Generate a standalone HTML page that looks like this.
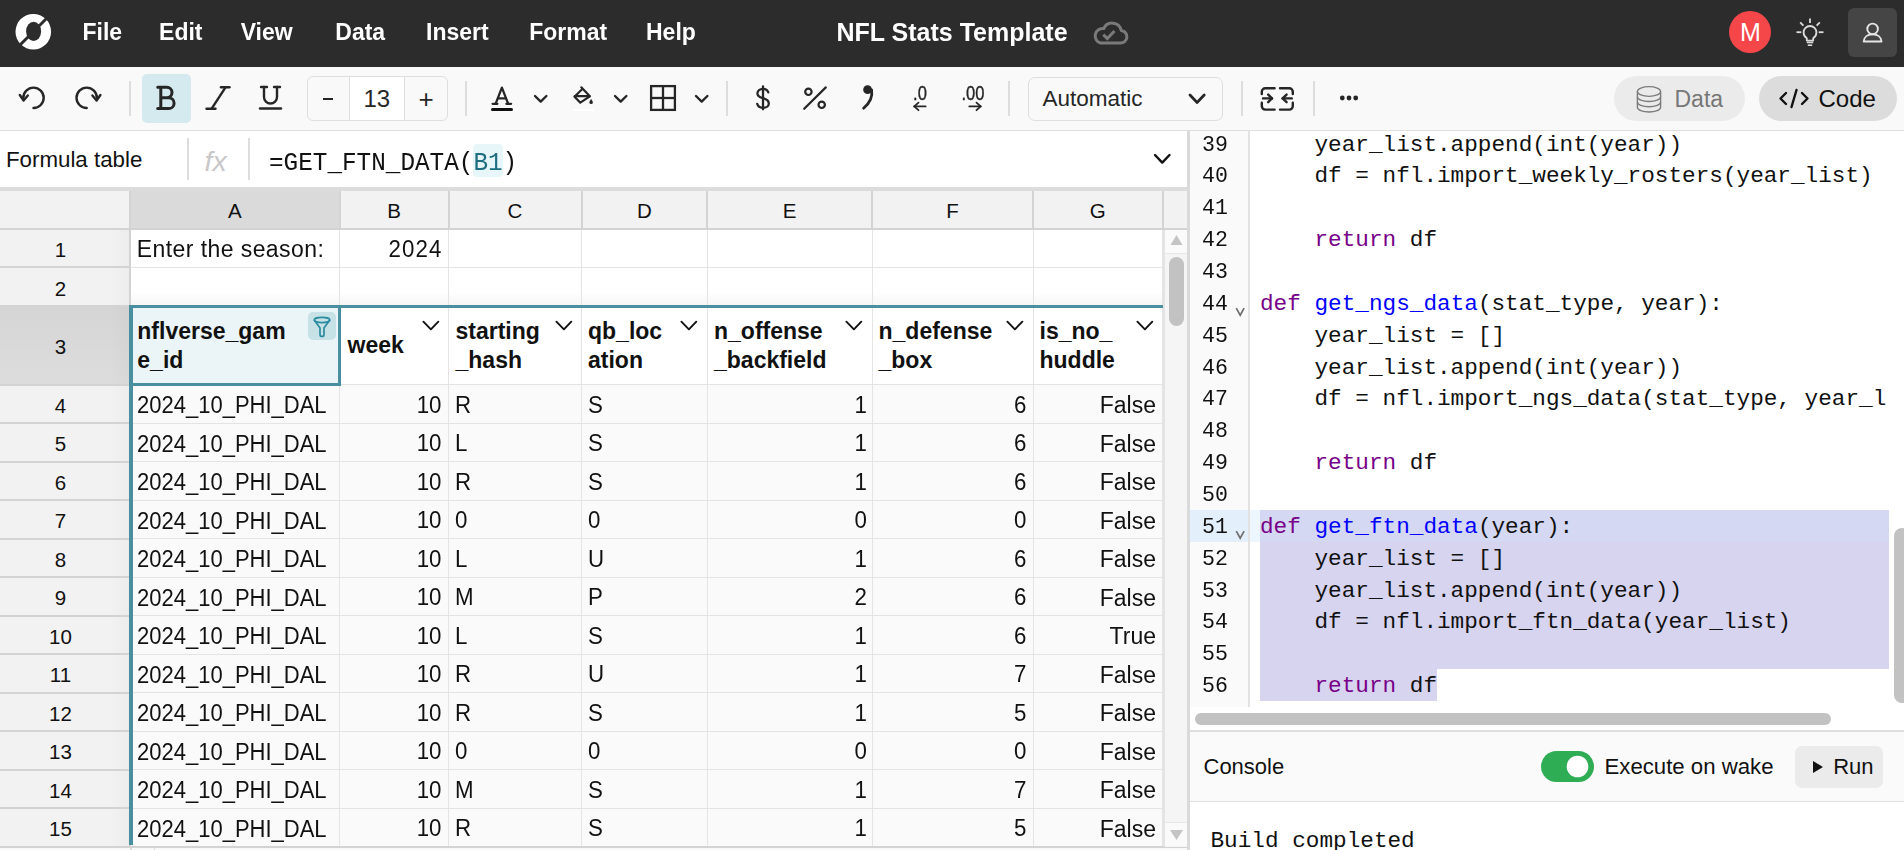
<!DOCTYPE html><html><head><meta charset="utf-8"><style>
html,body{margin:0;padding:0;width:1904px;height:850px;overflow:hidden;background:#fafafa;}
body{position:relative;font-family:"Liberation Sans", sans-serif;}
.t{position:absolute;white-space:pre;}
.r{position:absolute;}
</style></head><body>
<div class="r" style="left:0px;top:0px;width:1904px;height:67px;background:#2c2c2c;"></div>
<svg class="r" style="left:13px;top:11px;" width="42" height="42" viewBox="0 0 42 42"><defs><mask id="lm"><rect x="0" y="0" width="42" height="42" fill="#fff"/>
<ellipse cx="20.6" cy="20.4" rx="7.5" ry="9.6" fill="#000"/>
<line x1="36" y1="5" x2="5" y2="36" stroke="#000" stroke-width="3"/></mask></defs>
<circle cx="20.3" cy="20.7" r="17.8" fill="#fff" mask="url(#lm)"/></svg>
<div class="t" style="top:20.83px;font-size:23px;line-height:23px;color:#fff;font-weight:700;font-family:'Liberation Sans', sans-serif;left:82.50px;transform:scale(1.0,1.06);transform-origin:left 19.47px;">File</div>
<div class="t" style="top:20.83px;font-size:23px;line-height:23px;color:#fff;font-weight:700;font-family:'Liberation Sans', sans-serif;left:159.10px;transform:scale(1.0,1.06);transform-origin:left 19.47px;">Edit</div>
<div class="t" style="top:20.83px;font-size:23px;line-height:23px;color:#fff;font-weight:700;font-family:'Liberation Sans', sans-serif;left:240.70px;transform:scale(1.0,1.06);transform-origin:left 19.47px;">View</div>
<div class="t" style="top:20.83px;font-size:23px;line-height:23px;color:#fff;font-weight:700;font-family:'Liberation Sans', sans-serif;left:335.30px;transform:scale(1.0,1.06);transform-origin:left 19.47px;">Data</div>
<div class="t" style="top:20.83px;font-size:23px;line-height:23px;color:#fff;font-weight:700;font-family:'Liberation Sans', sans-serif;left:426.00px;transform:scale(1.0,1.06);transform-origin:left 19.47px;">Insert</div>
<div class="t" style="top:20.83px;font-size:23px;line-height:23px;color:#fff;font-weight:700;font-family:'Liberation Sans', sans-serif;left:529.20px;transform:scale(1.0,1.06);transform-origin:left 19.47px;">Format</div>
<div class="t" style="top:20.83px;font-size:23px;line-height:23px;color:#fff;font-weight:700;font-family:'Liberation Sans', sans-serif;left:646.00px;transform:scale(1.0,1.06);transform-origin:left 19.47px;">Help</div>
<div class="t" style="top:20.14px;font-size:25px;line-height:25px;color:#fff;font-weight:700;font-family:'Liberation Sans', sans-serif;left:836.50px;transform:scale(1.0,1.04);transform-origin:left 21.16px;">NFL Stats Template</div>
<svg class="r" style="left:1088.5px;top:17px;" width="42" height="30" viewBox="0 0 42 30"><path d="M11.5 26 H31 A6.3 6.3 0 0 0 32.2 13.4 A9.2 9.2 0 0 0 14.8 11.6 A7.4 7.4 0 0 0 11.5 26 Z" fill="none" stroke="#7a7a7a" stroke-width="3" stroke-linejoin="round"/>
<path d="M14.3 17.6 L18.3 21.6 L25.5 14" fill="none" stroke="#7a7a7a" stroke-width="3" stroke-linejoin="miter"/></svg>
<svg class="r" style="left:1729px;top:11px;" width="42" height="42" viewBox="0 0 42 42"><circle cx="21" cy="21" r="21" fill="#f5474a"/></svg>
<div class="t" style="top:19.84px;font-size:25px;line-height:25px;color:#fff;font-weight:400;font-family:'Liberation Sans', sans-serif;left:1250.50px;width:1000px;text-align:center;">M</div>
<svg class="r" style="left:1794px;top:16px;" width="32" height="32" viewBox="0 0 32 32"><g fill="none" stroke="#dcdcdc" stroke-width="1.8" stroke-linecap="butt">
<line x1="16" y1="2.4" x2="16" y2="7"/><line x1="2.5" y1="16.2" x2="7.3" y2="16.2"/><line x1="24.7" y1="16.2" x2="29.5" y2="16.2"/>
<line x1="6.2" y1="6.3" x2="9.4" y2="9.7"/><line x1="25.8" y1="6.3" x2="22.6" y2="9.7"/>
<path d="M12.8 24.6 V22.3 C10.6 20.8 9.6 18.8 9.6 16.4 A6.4 6.4 0 0 1 22.4 16.4 C22.4 18.8 21.4 20.8 19.2 22.3 V24.6 Z" stroke-linejoin="round"/>
<line x1="12.8" y1="26.5" x2="19.2" y2="26.5" stroke-width="1.5"/><line x1="13.8" y1="29.2" x2="18.2" y2="29.2" stroke-width="1.6"/></g></svg>
<div class="r" style="left:1848px;top:8px;width:49px;height:49px;background:#454545;border-radius:6px;"></div>
<svg class="r" style="left:1860px;top:20px;" width="26" height="26" viewBox="0 0 26 26"><g fill="none" stroke="#e6e6e6" stroke-width="1.9"><circle cx="12.6" cy="8.9" r="5.3"/>
<path d="M3.7 21.5 C4 16.8 7.8 14.3 12.6 14.3 C17.4 14.3 21.2 16.8 21.5 21.5 Z" stroke-linejoin="round"/></g></svg>
<div class="r" style="left:0px;top:67px;width:1904px;height:63px;background:#f9f9f9;"></div>
<div class="r" style="left:0px;top:130px;width:1904px;height:1px;background:#dedede;"></div>
<div class="r" style="left:129px;top:81px;width:2px;height:35px;background:#dddddd;"></div>
<div class="r" style="left:465px;top:81px;width:2px;height:35px;background:#dddddd;"></div>
<div class="r" style="left:726px;top:81px;width:2px;height:35px;background:#dddddd;"></div>
<div class="r" style="left:1008px;top:81px;width:2px;height:35px;background:#dddddd;"></div>
<div class="r" style="left:1241px;top:81px;width:2px;height:35px;background:#dddddd;"></div>
<div class="r" style="left:1313px;top:81px;width:2px;height:35px;background:#dddddd;"></div>
<svg class="r" style="left:17px;top:85px;" width="30" height="26" viewBox="0 0 30 26"><g fill="none" stroke="#262626" stroke-width="2.4" stroke-linecap="round" stroke-linejoin="round">
<path d="M16.5 23 A10.2 10.2 0 1 0 6.3 12.8 L6.5 14.5"/><path d="M2.8 10 L6.6 15.5 L10.8 10.5"/></g></svg>
<svg class="r" style="left:73px;top:85px;" width="30" height="26" viewBox="0 0 30 26"><g fill="none" stroke="#262626" stroke-width="2.4" stroke-linecap="round" stroke-linejoin="round">
<path d="M13.7 23 A10.2 10.2 0 1 1 23.9 12.8 L23.7 14.5"/><path d="M27.4 10 L23.6 15.5 L19.4 10.5"/></g></svg>
<div class="r" style="left:142px;top:74px;width:49px;height:49px;background:#d4eaef;border-radius:5px;"></div>
<svg class="r" style="left:150px;top:80px;" width="36" height="36" viewBox="0 0 36 36"><path d="M7.7 7.3 H16.8 A5.2 5.2 0 0 1 16.8 17.7 H10.8 M10.8 17.7 H18.65 A5.45 5.45 0 0 1 18.65 28.6 H7.7 M10.8 7.3 V28.6" fill="none" stroke="#262626" stroke-width="3" stroke-linecap="round" stroke-linejoin="round"/></svg>
<svg class="r" style="left:203px;top:84px;" width="30" height="28" viewBox="0 0 30 28"><g fill="none" stroke="#262626" stroke-width="2.4" stroke-linecap="round">
<line x1="22.5" y1="3.3" x2="8.5" y2="24.8"/><line x1="18" y1="3.3" x2="26.5" y2="3.3"/><line x1="3.5" y1="24.8" x2="12.5" y2="24.8"/></g></svg>
<svg class="r" style="left:256px;top:84px;" width="30" height="28" viewBox="0 0 30 28"><g fill="none" stroke="#262626" stroke-width="2.4" stroke-linecap="round">
<path d="M8 3 V13 A6.5 6.5 0 0 0 21 13 V3"/><line x1="5" y1="3" x2="11" y2="3"/><line x1="18" y1="3" x2="24" y2="3"/>
<line x1="4" y1="24.5" x2="25" y2="24.5"/></g></svg>
<div class="r" style="left:306.5px;top:76px;width:141.5px;height:45px;border:1px solid #dedede;border-radius:6px;box-sizing:border-box;"></div>
<div class="r" style="left:350px;top:77px;width:54px;height:43px;background:#ffffff;"></div>
<div class="r" style="left:349px;top:77px;width:1px;height:43px;background:#dedede;"></div>
<div class="r" style="left:404px;top:77px;width:1px;height:43px;background:#dedede;"></div>
<div class="r" style="left:323px;top:98.2px;width:10px;height:2.200000000000003px;background:#262626;"></div>
<div class="t" style="top:86.88px;font-size:24px;line-height:24px;color:#262626;font-weight:400;font-family:'Liberation Sans', sans-serif;left:-123.20px;width:1000px;text-align:center;">13</div>
<div class="t" style="top:86.39px;font-size:26px;line-height:26px;color:#262626;font-weight:400;font-family:'Liberation Sans', sans-serif;left:-73.80px;width:1000px;text-align:center;">+</div>
<svg class="r" style="left:488px;top:82.8px;" width="28" height="24" viewBox="0 0 28 24"><g fill="none" stroke="#262626" stroke-width="2.3" stroke-linecap="round" stroke-linejoin="round"><path d="M7.6 20.8 L13.9 4.6 L20.2 20.8"/><line x1="10.6" y1="15.4" x2="17.5" y2="15.4"/><line x1="4.6" y1="20.8" x2="9.4" y2="20.8"/><line x1="18.4" y1="20.8" x2="23.1" y2="20.8"/></g></svg>
<div class="r" style="left:490.8px;top:108px;width:22.69999999999999px;height:3.200000000000003px;background:#111;border-radius:2px;"></div>
<svg class="r" style="left:533.3px;top:94.2px;" width="15.4" height="9.6" viewBox="0 0 15.4 9.6"><path d="M2 2 L7.7 7.6 L13.4 2" fill="none" stroke="#262626" stroke-width="2.4" stroke-linecap="round" stroke-linejoin="round"/></svg>
<svg class="r" style="left:570px;top:83px;" width="28" height="26" viewBox="0 0 28 26"><g fill="none" stroke="#262626" stroke-width="2.2" stroke-linejoin="round" stroke-linecap="round">
<path d="M11.3 4.3 L19.8 13.3 L10.3 19.6 L4.5 13.8 L12.6 5.7"/><line x1="4.8" y1="13.2" x2="19.5" y2="13.2"/></g>
<path d="M21.1 16 C20 17.6 19.4 18.6 19.4 19.4 A1.7 1.7 0 0 0 22.8 19.4 C22.8 18.6 22.2 17.6 21.1 16 Z" fill="#262626"/></svg>
<div class="r" style="left:572.5px;top:109.3px;width:21.5px;height:1.7000000000000028px;background:#ffffff;border-radius:1px;"></div>
<svg class="r" style="left:613.2px;top:94.2px;" width="15.4" height="9.6" viewBox="0 0 15.4 9.6"><path d="M2 2 L7.7 7.6 L13.4 2" fill="none" stroke="#262626" stroke-width="2.4" stroke-linecap="round" stroke-linejoin="round"/></svg>
<svg class="r" style="left:648px;top:83px;" width="30" height="30" viewBox="0 0 30 30"><g fill="none" stroke="#262626" stroke-width="2.3"><rect x="3.1" y="3.1" width="23.8" height="23.8"/>
<line x1="15" y1="3" x2="15" y2="27"/><line x1="3" y1="15" x2="27" y2="15"/></g></svg>
<svg class="r" style="left:694.3px;top:94.2px;" width="15.4" height="9.6" viewBox="0 0 15.4 9.6"><path d="M2 2 L7.7 7.6 L13.4 2" fill="none" stroke="#262626" stroke-width="2.4" stroke-linecap="round" stroke-linejoin="round"/></svg>
<svg class="r" style="left:748px;top:80px;" width="30" height="36" viewBox="0 0 30 36"><g fill="none" stroke="#262626" stroke-width="2.3" stroke-linecap="round"><line x1="15" y1="6.4" x2="15" y2="29.3"/><path d="M20.3 12.3 C19.5 10 17.5 8.8 15 8.8 C11.8 8.8 9.4 10.8 9.4 13.4 C9.4 16 11.6 17.1 15 18.2 C18.6 19.3 20.8 20.6 20.8 23.4 C20.8 26 18.3 27.8 15 27.8 C12 27.8 9.8 26.3 9.2 23.8"/></g></svg>
<svg class="r" style="left:800px;top:84px;" width="30" height="28" viewBox="0 0 30 28"><g fill="none" stroke="#262626" stroke-width="2.2" stroke-linecap="round">
<line x1="25.8" y1="3.4" x2="4.2" y2="24.8"/><circle cx="8.4" cy="7.8" r="3.2"/><circle cx="21.7" cy="20.8" r="3.2"/></g></svg>
<svg class="r" style="left:858px;top:82px;" width="20" height="30" viewBox="0 0 20 30"><circle cx="9.6" cy="7.7" r="4.4" fill="#262626"/><path d="M13.6 8 C14.6 14 12.4 20.5 5.6 26.2" fill="none" stroke="#262626" stroke-width="2.8" stroke-linecap="round"/></svg>
<div class="t" style="top:83.89px;font-size:19.5px;line-height:19.5px;color:#262626;font-weight:400;font-family:'Liberation Sans', sans-serif;left:420.00px;width:1000px;text-align:center;transform:scale(0.85,1.0);transform-origin:center 16.51px;-webkit-text-stroke:0.35px #262626;">.0</div>
<svg class="r" style="left:910px;top:100px;" width="20" height="13" viewBox="0 0 20 13"><g fill="none" stroke="#262626" stroke-width="1.8" stroke-linecap="round" stroke-linejoin="round"><line x1="4.2" y1="6.4" x2="15.6" y2="6.4"/><path d="M8.5 2.6 L4.2 6.4 L8.5 10.2"/></g></svg>
<div class="t" style="top:83.89px;font-size:19.5px;line-height:19.5px;color:#262626;font-weight:400;font-family:'Liberation Sans', sans-serif;left:473.30px;width:1000px;text-align:center;transform:scale(0.85,1.0);transform-origin:center 16.51px;-webkit-text-stroke:0.35px #262626;">.00</div>
<svg class="r" style="left:966px;top:100px;" width="20" height="13" viewBox="0 0 20 13"><g fill="none" stroke="#262626" stroke-width="1.8" stroke-linecap="round" stroke-linejoin="round"><line x1="3.3" y1="6.4" x2="14.7" y2="6.4"/><path d="M10.5 2.6 L14.7 6.4 L10.5 10.2"/></g></svg>
<div class="r" style="left:1027.5px;top:77px;width:195px;height:44px;border:1px solid #dedede;border-radius:7px;box-sizing:border-box;"></div>
<div class="t" style="top:87.95px;font-size:22.5px;line-height:22.5px;color:#262626;font-weight:400;font-family:'Liberation Sans', sans-serif;left:1042.50px;">Automatic</div>
<svg class="r" style="left:1188.3px;top:93px;" width="18.2" height="11.5" viewBox="0 0 18.2 11.5"><path d="M2 2 L9.1 9.5 L16.2 2" fill="none" stroke="#262626" stroke-width="2.7" stroke-linecap="round" stroke-linejoin="round"/></svg>
<svg class="r" style="left:1255px;top:82px;" width="45" height="34" viewBox="0 0 45 34"><g fill="none" stroke="#262626" stroke-width="2.4" stroke-linecap="round" stroke-linejoin="round">
<path d="M19.6 6.2 H10.3 A3.5 3.5 0 0 0 6.8 9.7 V12"/><path d="M6.8 20.8 V24.1 A3.5 3.5 0 0 0 10.3 27.6 H19.6"/>
<path d="M25 6.2 H34.3 A3.5 3.5 0 0 1 37.8 9.7 V12"/><path d="M37.8 20.8 V24.1 A3.5 3.5 0 0 1 34.3 27.6 H25"/>
<path d="M8 16.4 H17"/><path d="M13.2 12.6 L17 16.4 L13.2 20.2"/>
<path d="M36.8 16.4 H27.6"/><path d="M31.6 12.6 L27.6 16.4 L31.6 20.2"/></g></svg>
<svg class="r" style="left:1336px;top:92px;" width="26" height="12" viewBox="0 0 26 12"><g fill="#262626"><circle cx="6.3" cy="6" r="2.4"/><circle cx="13" cy="6" r="2.4"/><circle cx="19.7" cy="6" r="2.4"/></g></svg>
<div class="r" style="left:1614px;top:76px;width:131px;height:45px;background:#ebebeb;border-radius:23px;"></div>
<svg class="r" style="left:1634px;top:84px;" width="30" height="30" viewBox="0 0 30 30"><g fill="none" stroke="#7b7b7b" stroke-width="1.35"><ellipse cx="15" cy="7.5" rx="11.6" ry="4.9"/>
<path d="M3.4 7.5 V23.3 C3.4 26 8.6 28 15 28 C21.4 28 26.6 26 26.6 23.3 V7.5"/>
<path d="M3.4 12.8 C3.4 15.5 8.6 17.5 15 17.5 C21.4 17.5 26.6 15.5 26.6 12.8"/><path d="M3.4 18 C3.4 20.7 8.6 22.7 15 22.7 C21.4 22.7 26.6 20.7 26.6 18"/></g></svg>
<div class="t" style="top:87.73px;font-size:23px;line-height:23px;color:#777777;font-weight:400;font-family:'Liberation Sans', sans-serif;left:1674.50px;">Data</div>
<div class="r" style="left:1759px;top:76px;width:138px;height:45px;background:#dcdcdc;border-radius:23px;"></div>
<svg class="r" style="left:1777px;top:87px;" width="34" height="23" viewBox="0 0 34 23"><g fill="none" stroke="#111" stroke-width="2.4" stroke-linecap="round" stroke-linejoin="round">
<path d="M9 6 L3.5 11.5 L9 17"/><path d="M25 6 L30.5 11.5 L25 17"/><line x1="19.5" y1="3" x2="14.5" y2="20"/></g></svg>
<div class="t" style="top:86.68px;font-size:24px;line-height:24px;color:#111;font-weight:400;font-family:'Liberation Sans', sans-serif;left:1818.50px;">Code</div>
<div class="r" style="left:0px;top:131px;width:1187px;height:56px;background:#ffffff;"></div>
<div class="t" style="top:148.72px;font-size:22.3px;line-height:22.3px;color:#111;font-weight:400;font-family:'Liberation Sans', sans-serif;left:6.00px;">Formula table</div>
<div class="r" style="left:187px;top:138px;width:2px;height:42px;background:#dddddd;"></div>
<div class="r" style="left:248px;top:138px;width:2px;height:42px;background:#dddddd;"></div>
<div class="t" style="top:147.07px;font-size:28.5px;line-height:28.5px;color:#c8c8c8;font-weight:400;font-family:'Liberation Sans', sans-serif;font-style:italic;left:204.50px;">fx</div>
<div class="r" style="left:473px;top:144px;width:30px;height:32.5px;background:#e6f6f9;border-radius:4px;"></div>
<div class='t' style="left:269px;top:149.69px;font-size:26.5px;line-height:26.5px;font-family:'Liberation Mono', monospace;color:#111;transform:scaleX(0.918);transform-origin:left top;">=GET_FTN_DATA(<span style='color:#1e6d80'>B1</span>)</div>
<svg class="r" style="left:1153.3px;top:153.4px;" width="18.5" height="11.6" viewBox="0 0 18.5 11.6"><path d="M2 2 L9.25 9.6 L16.5 2" fill="none" stroke="#111" stroke-width="2.4" stroke-linecap="round" stroke-linejoin="round"/></svg>
<div class="r" style="left:0px;top:187px;width:1187px;height:4px;background:#dcdcdc;"></div>
<div class="r" style="left:0px;top:191px;width:1187px;height:39px;background:#f2f2f2;"></div>
<div class="r" style="left:130px;top:191px;width:209px;height:38px;background:#dadada;"></div>
<div class="t" style="top:200.65px;font-size:20.5px;line-height:20.5px;color:#111;font-weight:400;font-family:'Liberation Sans', sans-serif;left:-265.25px;width:1000px;text-align:center;">A</div>
<div class="t" style="top:200.65px;font-size:20.5px;line-height:20.5px;color:#111;font-weight:400;font-family:'Liberation Sans', sans-serif;left:-106.00px;width:1000px;text-align:center;">B</div>
<div class="t" style="top:200.65px;font-size:20.5px;line-height:20.5px;color:#111;font-weight:400;font-family:'Liberation Sans', sans-serif;left:15.00px;width:1000px;text-align:center;">C</div>
<div class="t" style="top:200.65px;font-size:20.5px;line-height:20.5px;color:#111;font-weight:400;font-family:'Liberation Sans', sans-serif;left:144.40px;width:1000px;text-align:center;">D</div>
<div class="t" style="top:200.65px;font-size:20.5px;line-height:20.5px;color:#111;font-weight:400;font-family:'Liberation Sans', sans-serif;left:289.65px;width:1000px;text-align:center;">E</div>
<div class="t" style="top:200.65px;font-size:20.5px;line-height:20.5px;color:#111;font-weight:400;font-family:'Liberation Sans', sans-serif;left:452.50px;width:1000px;text-align:center;">F</div>
<div class="t" style="top:200.65px;font-size:20.5px;line-height:20.5px;color:#111;font-weight:400;font-family:'Liberation Sans', sans-serif;left:597.75px;width:1000px;text-align:center;">G</div>
<div class="r" style="left:0px;top:228px;width:1187px;height:2px;background:#d3d3d3;"></div>
<div class="r" style="left:128.5px;top:191px;width:2.0px;height:659px;background:#d3d3d3;"></div>
<div class="r" style="left:338.5px;top:191px;width:2.0px;height:38px;background:#d3d3d3;"></div>
<div class="r" style="left:447.5px;top:191px;width:2.0px;height:38px;background:#d3d3d3;"></div>
<div class="r" style="left:580.5px;top:191px;width:2.0px;height:38px;background:#d3d3d3;"></div>
<div class="r" style="left:706.3px;top:191px;width:2.0px;height:38px;background:#d3d3d3;"></div>
<div class="r" style="left:871px;top:191px;width:2px;height:38px;background:#d3d3d3;"></div>
<div class="r" style="left:1032px;top:191px;width:2px;height:38px;background:#d3d3d3;"></div>
<div class="r" style="left:1161.5px;top:191px;width:2.0px;height:38px;background:#d3d3d3;"></div>
<div class="r" style="left:130.5px;top:230px;width:1032.0px;height:76px;background:#ffffff;"></div>
<div class="r" style="left:130.5px;top:306px;width:1032.0px;height:78px;background:#ffffff;"></div>
<div class="r" style="left:130.5px;top:385px;width:1032.0px;height:462px;background:#fafafa;"></div>
<div class="r" style="left:130.5px;top:291px;width:1032.0px;height:14px;background:linear-gradient(to bottom, rgba(0,0,0,0), rgba(0,0,0,0.035));"></div>
<div class="r" style="left:0px;top:230px;width:128.5px;height:617px;background:#f2f2f2;"></div>
<div class="r" style="left:0px;top:306px;width:128.5px;height:78.60000000000002px;background:linear-gradient(to bottom,#d5d5d5,#dddddd);"></div>
<div class="r" style="left:110px;top:230px;width:18.5px;height:617px;background:linear-gradient(to right, rgba(0,0,0,0), rgba(0,0,0,0.025));"></div>
<div class="r" style="left:0px;top:266.2px;width:128.5px;height:2.0px;background:#d3d3d3;"></div>
<div class="r" style="left:130.5px;top:266.7px;width:1032.0px;height:1.0px;background:#e4e4e4;"></div>
<div class="r" style="left:0px;top:305.3px;width:128.5px;height:2.0px;background:#d3d3d3;"></div>
<div class="r" style="left:130.5px;top:305.8px;width:1032.0px;height:1.0px;background:#e4e4e4;"></div>
<div class="r" style="left:0px;top:383.6px;width:128.5px;height:2.0px;background:#d3d3d3;"></div>
<div class="r" style="left:130.5px;top:384.1px;width:1032.0px;height:1.0px;background:#e4e4e4;"></div>
<div class="r" style="left:0px;top:422.1px;width:128.5px;height:2.0px;background:#d3d3d3;"></div>
<div class="r" style="left:130.5px;top:422.6px;width:1032.0px;height:1.0px;background:#e4e4e4;"></div>
<div class="r" style="left:0px;top:460.6px;width:128.5px;height:2.0px;background:#d3d3d3;"></div>
<div class="r" style="left:130.5px;top:461.1px;width:1032.0px;height:1.0px;background:#e4e4e4;"></div>
<div class="r" style="left:0px;top:499.1px;width:128.5px;height:2.0px;background:#d3d3d3;"></div>
<div class="r" style="left:130.5px;top:499.6px;width:1032.0px;height:1.0px;background:#e4e4e4;"></div>
<div class="r" style="left:0px;top:537.6px;width:128.5px;height:2.0px;background:#d3d3d3;"></div>
<div class="r" style="left:130.5px;top:538.1px;width:1032.0px;height:1.0px;background:#e4e4e4;"></div>
<div class="r" style="left:0px;top:576.1px;width:128.5px;height:2.0px;background:#d3d3d3;"></div>
<div class="r" style="left:130.5px;top:576.6px;width:1032.0px;height:1.0px;background:#e4e4e4;"></div>
<div class="r" style="left:0px;top:614.6px;width:128.5px;height:2.0px;background:#d3d3d3;"></div>
<div class="r" style="left:130.5px;top:615.1px;width:1032.0px;height:1.0px;background:#e4e4e4;"></div>
<div class="r" style="left:0px;top:653.1px;width:128.5px;height:2.0px;background:#d3d3d3;"></div>
<div class="r" style="left:130.5px;top:653.6px;width:1032.0px;height:1.0px;background:#e4e4e4;"></div>
<div class="r" style="left:0px;top:691.6px;width:128.5px;height:2.0px;background:#d3d3d3;"></div>
<div class="r" style="left:130.5px;top:692.1px;width:1032.0px;height:1.0px;background:#e4e4e4;"></div>
<div class="r" style="left:0px;top:730.1px;width:128.5px;height:2.0px;background:#d3d3d3;"></div>
<div class="r" style="left:130.5px;top:730.6px;width:1032.0px;height:1.0px;background:#e4e4e4;"></div>
<div class="r" style="left:0px;top:768.6px;width:128.5px;height:2.0px;background:#d3d3d3;"></div>
<div class="r" style="left:130.5px;top:769.1px;width:1032.0px;height:1.0px;background:#e4e4e4;"></div>
<div class="r" style="left:0px;top:807.1px;width:128.5px;height:2.0px;background:#d3d3d3;"></div>
<div class="r" style="left:130.5px;top:807.6px;width:1032.0px;height:1.0px;background:#e4e4e4;"></div>
<div class="r" style="left:0px;top:845.6px;width:128.5px;height:2.0px;background:#d3d3d3;"></div>
<div class="r" style="left:130.5px;top:846.1px;width:1032.0px;height:1.0px;background:#e4e4e4;"></div>
<div class="r" style="left:339.0px;top:230px;width:1.0px;height:617px;background:#e4e4e4;"></div>
<div class="r" style="left:448.0px;top:230px;width:1.0px;height:617px;background:#e4e4e4;"></div>
<div class="r" style="left:581.0px;top:230px;width:1.0px;height:617px;background:#e4e4e4;"></div>
<div class="r" style="left:706.8px;top:230px;width:1.0px;height:617px;background:#e4e4e4;"></div>
<div class="r" style="left:871.5px;top:230px;width:1.0px;height:617px;background:#e4e4e4;"></div>
<div class="r" style="left:1032.5px;top:230px;width:1.0px;height:617px;background:#e4e4e4;"></div>
<div class="r" style="left:1161.5px;top:230px;width:2.0px;height:617px;background:#e4e4e4;"></div>
<div class="t" style="top:240.30px;font-size:20.5px;line-height:20.5px;color:#111;font-weight:400;font-family:'Liberation Sans', sans-serif;left:-439.50px;width:1000px;text-align:center;">1</div>
<div class="t" style="top:278.70px;font-size:20.5px;line-height:20.5px;color:#111;font-weight:400;font-family:'Liberation Sans', sans-serif;left:-439.50px;width:1000px;text-align:center;">2</div>
<div class="t" style="top:337.40px;font-size:20.5px;line-height:20.5px;color:#111;font-weight:400;font-family:'Liberation Sans', sans-serif;left:-439.50px;width:1000px;text-align:center;">3</div>
<div class="t" style="top:395.80px;font-size:20.5px;line-height:20.5px;color:#111;font-weight:400;font-family:'Liberation Sans', sans-serif;left:-439.50px;width:1000px;text-align:center;">4</div>
<div class="t" style="top:434.30px;font-size:20.5px;line-height:20.5px;color:#111;font-weight:400;font-family:'Liberation Sans', sans-serif;left:-439.50px;width:1000px;text-align:center;">5</div>
<div class="t" style="top:472.80px;font-size:20.5px;line-height:20.5px;color:#111;font-weight:400;font-family:'Liberation Sans', sans-serif;left:-439.50px;width:1000px;text-align:center;">6</div>
<div class="t" style="top:511.30px;font-size:20.5px;line-height:20.5px;color:#111;font-weight:400;font-family:'Liberation Sans', sans-serif;left:-439.50px;width:1000px;text-align:center;">7</div>
<div class="t" style="top:549.80px;font-size:20.5px;line-height:20.5px;color:#111;font-weight:400;font-family:'Liberation Sans', sans-serif;left:-439.50px;width:1000px;text-align:center;">8</div>
<div class="t" style="top:588.30px;font-size:20.5px;line-height:20.5px;color:#111;font-weight:400;font-family:'Liberation Sans', sans-serif;left:-439.50px;width:1000px;text-align:center;">9</div>
<div class="t" style="top:626.80px;font-size:20.5px;line-height:20.5px;color:#111;font-weight:400;font-family:'Liberation Sans', sans-serif;left:-439.50px;width:1000px;text-align:center;">10</div>
<div class="t" style="top:665.30px;font-size:20.5px;line-height:20.5px;color:#111;font-weight:400;font-family:'Liberation Sans', sans-serif;left:-439.50px;width:1000px;text-align:center;">11</div>
<div class="t" style="top:703.80px;font-size:20.5px;line-height:20.5px;color:#111;font-weight:400;font-family:'Liberation Sans', sans-serif;left:-439.50px;width:1000px;text-align:center;">12</div>
<div class="t" style="top:742.30px;font-size:20.5px;line-height:20.5px;color:#111;font-weight:400;font-family:'Liberation Sans', sans-serif;left:-439.50px;width:1000px;text-align:center;">13</div>
<div class="t" style="top:780.80px;font-size:20.5px;line-height:20.5px;color:#111;font-weight:400;font-family:'Liberation Sans', sans-serif;left:-439.50px;width:1000px;text-align:center;">14</div>
<div class="t" style="top:819.30px;font-size:20.5px;line-height:20.5px;color:#111;font-weight:400;font-family:'Liberation Sans', sans-serif;left:-439.50px;width:1000px;text-align:center;">15</div>
<div class="r" style="left:0px;top:845.5px;width:1187px;height:2.0px;background:#d3d3d3;"></div>
<div class="r" style="left:0px;top:847.5px;width:1187px;height:2.5px;background:#f9f9f9;"></div>
<div class="r" style="left:130px;top:847.5px;width:1.5px;height:2.5px;background:#dddddd;"></div>
<div class="r" style="left:153.5px;top:847.5px;width:1.5px;height:2.5px;background:#dddddd;"></div>
<div class="t" style="top:238.13px;font-size:23px;line-height:23px;color:#111;font-weight:400;font-family:'Liberation Sans', sans-serif;letter-spacing:0.42px;left:136.80px;transform:scale(1.0,1.05);transform-origin:left 19.47px;">Enter the season:</div>
<div class="t" style="top:238.92px;font-size:22.3px;line-height:22.3px;color:#111;font-weight:400;font-family:'Liberation Sans', sans-serif;letter-spacing:1.1px;right:1461.40px;transform:scale(1.0,1.08);transform-origin:right 18.88px;">2024</div>
<div class="t" style="top:395.08px;font-size:22px;line-height:22px;color:#111;font-weight:400;font-family:'Liberation Sans', sans-serif;left:137.00px;transform:scale(1.0,1.1);transform-origin:left 18.62px;">2024_10_PHI_DAL</div>
<div class="t" style="top:394.82px;font-size:22.3px;line-height:22.3px;color:#111;font-weight:400;font-family:'Liberation Sans', sans-serif;right:1462.50px;transform:scale(1.0,1.08);transform-origin:right 18.88px;">10</div>
<div class="t" style="top:394.82px;font-size:22.3px;line-height:22.3px;color:#111;font-weight:400;font-family:'Liberation Sans', sans-serif;left:455.00px;transform:scale(1.0,1.08);transform-origin:left 18.88px;">R</div>
<div class="t" style="top:394.82px;font-size:22.3px;line-height:22.3px;color:#111;font-weight:400;font-family:'Liberation Sans', sans-serif;left:588.00px;transform:scale(1.0,1.08);transform-origin:left 18.88px;">S</div>
<div class="t" style="top:394.82px;font-size:22.3px;line-height:22.3px;color:#111;font-weight:400;font-family:'Liberation Sans', sans-serif;right:1037.00px;transform:scale(1.0,1.08);transform-origin:right 18.88px;">1</div>
<div class="t" style="top:394.82px;font-size:22.3px;line-height:22.3px;color:#111;font-weight:400;font-family:'Liberation Sans', sans-serif;right:877.50px;transform:scale(1.0,1.08);transform-origin:right 18.88px;">6</div>
<div class="t" style="top:394.23px;font-size:23px;line-height:23px;color:#111;font-weight:400;font-family:'Liberation Sans', sans-serif;right:748.00px;transform:scale(1.0,1.05);transform-origin:right 19.47px;">False</div>
<div class="t" style="top:433.58px;font-size:22px;line-height:22px;color:#111;font-weight:400;font-family:'Liberation Sans', sans-serif;left:137.00px;transform:scale(1.0,1.1);transform-origin:left 18.62px;">2024_10_PHI_DAL</div>
<div class="t" style="top:433.32px;font-size:22.3px;line-height:22.3px;color:#111;font-weight:400;font-family:'Liberation Sans', sans-serif;right:1462.50px;transform:scale(1.0,1.08);transform-origin:right 18.88px;">10</div>
<div class="t" style="top:433.32px;font-size:22.3px;line-height:22.3px;color:#111;font-weight:400;font-family:'Liberation Sans', sans-serif;left:455.00px;transform:scale(1.0,1.08);transform-origin:left 18.88px;">L</div>
<div class="t" style="top:433.32px;font-size:22.3px;line-height:22.3px;color:#111;font-weight:400;font-family:'Liberation Sans', sans-serif;left:588.00px;transform:scale(1.0,1.08);transform-origin:left 18.88px;">S</div>
<div class="t" style="top:433.32px;font-size:22.3px;line-height:22.3px;color:#111;font-weight:400;font-family:'Liberation Sans', sans-serif;right:1037.00px;transform:scale(1.0,1.08);transform-origin:right 18.88px;">1</div>
<div class="t" style="top:433.32px;font-size:22.3px;line-height:22.3px;color:#111;font-weight:400;font-family:'Liberation Sans', sans-serif;right:877.50px;transform:scale(1.0,1.08);transform-origin:right 18.88px;">6</div>
<div class="t" style="top:432.73px;font-size:23px;line-height:23px;color:#111;font-weight:400;font-family:'Liberation Sans', sans-serif;right:748.00px;transform:scale(1.0,1.05);transform-origin:right 19.47px;">False</div>
<div class="t" style="top:472.08px;font-size:22px;line-height:22px;color:#111;font-weight:400;font-family:'Liberation Sans', sans-serif;left:137.00px;transform:scale(1.0,1.1);transform-origin:left 18.62px;">2024_10_PHI_DAL</div>
<div class="t" style="top:471.82px;font-size:22.3px;line-height:22.3px;color:#111;font-weight:400;font-family:'Liberation Sans', sans-serif;right:1462.50px;transform:scale(1.0,1.08);transform-origin:right 18.88px;">10</div>
<div class="t" style="top:471.82px;font-size:22.3px;line-height:22.3px;color:#111;font-weight:400;font-family:'Liberation Sans', sans-serif;left:455.00px;transform:scale(1.0,1.08);transform-origin:left 18.88px;">R</div>
<div class="t" style="top:471.82px;font-size:22.3px;line-height:22.3px;color:#111;font-weight:400;font-family:'Liberation Sans', sans-serif;left:588.00px;transform:scale(1.0,1.08);transform-origin:left 18.88px;">S</div>
<div class="t" style="top:471.82px;font-size:22.3px;line-height:22.3px;color:#111;font-weight:400;font-family:'Liberation Sans', sans-serif;right:1037.00px;transform:scale(1.0,1.08);transform-origin:right 18.88px;">1</div>
<div class="t" style="top:471.82px;font-size:22.3px;line-height:22.3px;color:#111;font-weight:400;font-family:'Liberation Sans', sans-serif;right:877.50px;transform:scale(1.0,1.08);transform-origin:right 18.88px;">6</div>
<div class="t" style="top:471.23px;font-size:23px;line-height:23px;color:#111;font-weight:400;font-family:'Liberation Sans', sans-serif;right:748.00px;transform:scale(1.0,1.05);transform-origin:right 19.47px;">False</div>
<div class="t" style="top:510.58px;font-size:22px;line-height:22px;color:#111;font-weight:400;font-family:'Liberation Sans', sans-serif;left:137.00px;transform:scale(1.0,1.1);transform-origin:left 18.62px;">2024_10_PHI_DAL</div>
<div class="t" style="top:510.32px;font-size:22.3px;line-height:22.3px;color:#111;font-weight:400;font-family:'Liberation Sans', sans-serif;right:1462.50px;transform:scale(1.0,1.08);transform-origin:right 18.88px;">10</div>
<div class="t" style="top:510.32px;font-size:22.3px;line-height:22.3px;color:#111;font-weight:400;font-family:'Liberation Sans', sans-serif;left:455.00px;transform:scale(1.0,1.08);transform-origin:left 18.88px;">0</div>
<div class="t" style="top:510.32px;font-size:22.3px;line-height:22.3px;color:#111;font-weight:400;font-family:'Liberation Sans', sans-serif;left:588.00px;transform:scale(1.0,1.08);transform-origin:left 18.88px;">0</div>
<div class="t" style="top:510.32px;font-size:22.3px;line-height:22.3px;color:#111;font-weight:400;font-family:'Liberation Sans', sans-serif;right:1037.00px;transform:scale(1.0,1.08);transform-origin:right 18.88px;">0</div>
<div class="t" style="top:510.32px;font-size:22.3px;line-height:22.3px;color:#111;font-weight:400;font-family:'Liberation Sans', sans-serif;right:877.50px;transform:scale(1.0,1.08);transform-origin:right 18.88px;">0</div>
<div class="t" style="top:509.73px;font-size:23px;line-height:23px;color:#111;font-weight:400;font-family:'Liberation Sans', sans-serif;right:748.00px;transform:scale(1.0,1.05);transform-origin:right 19.47px;">False</div>
<div class="t" style="top:549.08px;font-size:22px;line-height:22px;color:#111;font-weight:400;font-family:'Liberation Sans', sans-serif;left:137.00px;transform:scale(1.0,1.1);transform-origin:left 18.62px;">2024_10_PHI_DAL</div>
<div class="t" style="top:548.82px;font-size:22.3px;line-height:22.3px;color:#111;font-weight:400;font-family:'Liberation Sans', sans-serif;right:1462.50px;transform:scale(1.0,1.08);transform-origin:right 18.88px;">10</div>
<div class="t" style="top:548.82px;font-size:22.3px;line-height:22.3px;color:#111;font-weight:400;font-family:'Liberation Sans', sans-serif;left:455.00px;transform:scale(1.0,1.08);transform-origin:left 18.88px;">L</div>
<div class="t" style="top:548.82px;font-size:22.3px;line-height:22.3px;color:#111;font-weight:400;font-family:'Liberation Sans', sans-serif;left:588.00px;transform:scale(1.0,1.08);transform-origin:left 18.88px;">U</div>
<div class="t" style="top:548.82px;font-size:22.3px;line-height:22.3px;color:#111;font-weight:400;font-family:'Liberation Sans', sans-serif;right:1037.00px;transform:scale(1.0,1.08);transform-origin:right 18.88px;">1</div>
<div class="t" style="top:548.82px;font-size:22.3px;line-height:22.3px;color:#111;font-weight:400;font-family:'Liberation Sans', sans-serif;right:877.50px;transform:scale(1.0,1.08);transform-origin:right 18.88px;">6</div>
<div class="t" style="top:548.23px;font-size:23px;line-height:23px;color:#111;font-weight:400;font-family:'Liberation Sans', sans-serif;right:748.00px;transform:scale(1.0,1.05);transform-origin:right 19.47px;">False</div>
<div class="t" style="top:587.58px;font-size:22px;line-height:22px;color:#111;font-weight:400;font-family:'Liberation Sans', sans-serif;left:137.00px;transform:scale(1.0,1.1);transform-origin:left 18.62px;">2024_10_PHI_DAL</div>
<div class="t" style="top:587.32px;font-size:22.3px;line-height:22.3px;color:#111;font-weight:400;font-family:'Liberation Sans', sans-serif;right:1462.50px;transform:scale(1.0,1.08);transform-origin:right 18.88px;">10</div>
<div class="t" style="top:587.32px;font-size:22.3px;line-height:22.3px;color:#111;font-weight:400;font-family:'Liberation Sans', sans-serif;left:455.00px;transform:scale(1.0,1.08);transform-origin:left 18.88px;">M</div>
<div class="t" style="top:587.32px;font-size:22.3px;line-height:22.3px;color:#111;font-weight:400;font-family:'Liberation Sans', sans-serif;left:588.00px;transform:scale(1.0,1.08);transform-origin:left 18.88px;">P</div>
<div class="t" style="top:587.32px;font-size:22.3px;line-height:22.3px;color:#111;font-weight:400;font-family:'Liberation Sans', sans-serif;right:1037.00px;transform:scale(1.0,1.08);transform-origin:right 18.88px;">2</div>
<div class="t" style="top:587.32px;font-size:22.3px;line-height:22.3px;color:#111;font-weight:400;font-family:'Liberation Sans', sans-serif;right:877.50px;transform:scale(1.0,1.08);transform-origin:right 18.88px;">6</div>
<div class="t" style="top:586.73px;font-size:23px;line-height:23px;color:#111;font-weight:400;font-family:'Liberation Sans', sans-serif;right:748.00px;transform:scale(1.0,1.05);transform-origin:right 19.47px;">False</div>
<div class="t" style="top:626.08px;font-size:22px;line-height:22px;color:#111;font-weight:400;font-family:'Liberation Sans', sans-serif;left:137.00px;transform:scale(1.0,1.1);transform-origin:left 18.62px;">2024_10_PHI_DAL</div>
<div class="t" style="top:625.82px;font-size:22.3px;line-height:22.3px;color:#111;font-weight:400;font-family:'Liberation Sans', sans-serif;right:1462.50px;transform:scale(1.0,1.08);transform-origin:right 18.88px;">10</div>
<div class="t" style="top:625.82px;font-size:22.3px;line-height:22.3px;color:#111;font-weight:400;font-family:'Liberation Sans', sans-serif;left:455.00px;transform:scale(1.0,1.08);transform-origin:left 18.88px;">L</div>
<div class="t" style="top:625.82px;font-size:22.3px;line-height:22.3px;color:#111;font-weight:400;font-family:'Liberation Sans', sans-serif;left:588.00px;transform:scale(1.0,1.08);transform-origin:left 18.88px;">S</div>
<div class="t" style="top:625.82px;font-size:22.3px;line-height:22.3px;color:#111;font-weight:400;font-family:'Liberation Sans', sans-serif;right:1037.00px;transform:scale(1.0,1.08);transform-origin:right 18.88px;">1</div>
<div class="t" style="top:625.82px;font-size:22.3px;line-height:22.3px;color:#111;font-weight:400;font-family:'Liberation Sans', sans-serif;right:877.50px;transform:scale(1.0,1.08);transform-origin:right 18.88px;">6</div>
<div class="t" style="top:625.23px;font-size:23px;line-height:23px;color:#111;font-weight:400;font-family:'Liberation Sans', sans-serif;right:748.00px;transform:scale(1.0,1.05);transform-origin:right 19.47px;">True</div>
<div class="t" style="top:664.58px;font-size:22px;line-height:22px;color:#111;font-weight:400;font-family:'Liberation Sans', sans-serif;left:137.00px;transform:scale(1.0,1.1);transform-origin:left 18.62px;">2024_10_PHI_DAL</div>
<div class="t" style="top:664.32px;font-size:22.3px;line-height:22.3px;color:#111;font-weight:400;font-family:'Liberation Sans', sans-serif;right:1462.50px;transform:scale(1.0,1.08);transform-origin:right 18.88px;">10</div>
<div class="t" style="top:664.32px;font-size:22.3px;line-height:22.3px;color:#111;font-weight:400;font-family:'Liberation Sans', sans-serif;left:455.00px;transform:scale(1.0,1.08);transform-origin:left 18.88px;">R</div>
<div class="t" style="top:664.32px;font-size:22.3px;line-height:22.3px;color:#111;font-weight:400;font-family:'Liberation Sans', sans-serif;left:588.00px;transform:scale(1.0,1.08);transform-origin:left 18.88px;">U</div>
<div class="t" style="top:664.32px;font-size:22.3px;line-height:22.3px;color:#111;font-weight:400;font-family:'Liberation Sans', sans-serif;right:1037.00px;transform:scale(1.0,1.08);transform-origin:right 18.88px;">1</div>
<div class="t" style="top:664.32px;font-size:22.3px;line-height:22.3px;color:#111;font-weight:400;font-family:'Liberation Sans', sans-serif;right:877.50px;transform:scale(1.0,1.08);transform-origin:right 18.88px;">7</div>
<div class="t" style="top:663.73px;font-size:23px;line-height:23px;color:#111;font-weight:400;font-family:'Liberation Sans', sans-serif;right:748.00px;transform:scale(1.0,1.05);transform-origin:right 19.47px;">False</div>
<div class="t" style="top:703.08px;font-size:22px;line-height:22px;color:#111;font-weight:400;font-family:'Liberation Sans', sans-serif;left:137.00px;transform:scale(1.0,1.1);transform-origin:left 18.62px;">2024_10_PHI_DAL</div>
<div class="t" style="top:702.82px;font-size:22.3px;line-height:22.3px;color:#111;font-weight:400;font-family:'Liberation Sans', sans-serif;right:1462.50px;transform:scale(1.0,1.08);transform-origin:right 18.88px;">10</div>
<div class="t" style="top:702.82px;font-size:22.3px;line-height:22.3px;color:#111;font-weight:400;font-family:'Liberation Sans', sans-serif;left:455.00px;transform:scale(1.0,1.08);transform-origin:left 18.88px;">R</div>
<div class="t" style="top:702.82px;font-size:22.3px;line-height:22.3px;color:#111;font-weight:400;font-family:'Liberation Sans', sans-serif;left:588.00px;transform:scale(1.0,1.08);transform-origin:left 18.88px;">S</div>
<div class="t" style="top:702.82px;font-size:22.3px;line-height:22.3px;color:#111;font-weight:400;font-family:'Liberation Sans', sans-serif;right:1037.00px;transform:scale(1.0,1.08);transform-origin:right 18.88px;">1</div>
<div class="t" style="top:702.82px;font-size:22.3px;line-height:22.3px;color:#111;font-weight:400;font-family:'Liberation Sans', sans-serif;right:877.50px;transform:scale(1.0,1.08);transform-origin:right 18.88px;">5</div>
<div class="t" style="top:702.23px;font-size:23px;line-height:23px;color:#111;font-weight:400;font-family:'Liberation Sans', sans-serif;right:748.00px;transform:scale(1.0,1.05);transform-origin:right 19.47px;">False</div>
<div class="t" style="top:741.58px;font-size:22px;line-height:22px;color:#111;font-weight:400;font-family:'Liberation Sans', sans-serif;left:137.00px;transform:scale(1.0,1.1);transform-origin:left 18.62px;">2024_10_PHI_DAL</div>
<div class="t" style="top:741.32px;font-size:22.3px;line-height:22.3px;color:#111;font-weight:400;font-family:'Liberation Sans', sans-serif;right:1462.50px;transform:scale(1.0,1.08);transform-origin:right 18.88px;">10</div>
<div class="t" style="top:741.32px;font-size:22.3px;line-height:22.3px;color:#111;font-weight:400;font-family:'Liberation Sans', sans-serif;left:455.00px;transform:scale(1.0,1.08);transform-origin:left 18.88px;">0</div>
<div class="t" style="top:741.32px;font-size:22.3px;line-height:22.3px;color:#111;font-weight:400;font-family:'Liberation Sans', sans-serif;left:588.00px;transform:scale(1.0,1.08);transform-origin:left 18.88px;">0</div>
<div class="t" style="top:741.32px;font-size:22.3px;line-height:22.3px;color:#111;font-weight:400;font-family:'Liberation Sans', sans-serif;right:1037.00px;transform:scale(1.0,1.08);transform-origin:right 18.88px;">0</div>
<div class="t" style="top:741.32px;font-size:22.3px;line-height:22.3px;color:#111;font-weight:400;font-family:'Liberation Sans', sans-serif;right:877.50px;transform:scale(1.0,1.08);transform-origin:right 18.88px;">0</div>
<div class="t" style="top:740.73px;font-size:23px;line-height:23px;color:#111;font-weight:400;font-family:'Liberation Sans', sans-serif;right:748.00px;transform:scale(1.0,1.05);transform-origin:right 19.47px;">False</div>
<div class="t" style="top:780.08px;font-size:22px;line-height:22px;color:#111;font-weight:400;font-family:'Liberation Sans', sans-serif;left:137.00px;transform:scale(1.0,1.1);transform-origin:left 18.62px;">2024_10_PHI_DAL</div>
<div class="t" style="top:779.82px;font-size:22.3px;line-height:22.3px;color:#111;font-weight:400;font-family:'Liberation Sans', sans-serif;right:1462.50px;transform:scale(1.0,1.08);transform-origin:right 18.88px;">10</div>
<div class="t" style="top:779.82px;font-size:22.3px;line-height:22.3px;color:#111;font-weight:400;font-family:'Liberation Sans', sans-serif;left:455.00px;transform:scale(1.0,1.08);transform-origin:left 18.88px;">M</div>
<div class="t" style="top:779.82px;font-size:22.3px;line-height:22.3px;color:#111;font-weight:400;font-family:'Liberation Sans', sans-serif;left:588.00px;transform:scale(1.0,1.08);transform-origin:left 18.88px;">S</div>
<div class="t" style="top:779.82px;font-size:22.3px;line-height:22.3px;color:#111;font-weight:400;font-family:'Liberation Sans', sans-serif;right:1037.00px;transform:scale(1.0,1.08);transform-origin:right 18.88px;">1</div>
<div class="t" style="top:779.82px;font-size:22.3px;line-height:22.3px;color:#111;font-weight:400;font-family:'Liberation Sans', sans-serif;right:877.50px;transform:scale(1.0,1.08);transform-origin:right 18.88px;">7</div>
<div class="t" style="top:779.23px;font-size:23px;line-height:23px;color:#111;font-weight:400;font-family:'Liberation Sans', sans-serif;right:748.00px;transform:scale(1.0,1.05);transform-origin:right 19.47px;">False</div>
<div class="t" style="top:818.58px;font-size:22px;line-height:22px;color:#111;font-weight:400;font-family:'Liberation Sans', sans-serif;left:137.00px;transform:scale(1.0,1.1);transform-origin:left 18.62px;">2024_10_PHI_DAL</div>
<div class="t" style="top:818.32px;font-size:22.3px;line-height:22.3px;color:#111;font-weight:400;font-family:'Liberation Sans', sans-serif;right:1462.50px;transform:scale(1.0,1.08);transform-origin:right 18.88px;">10</div>
<div class="t" style="top:818.32px;font-size:22.3px;line-height:22.3px;color:#111;font-weight:400;font-family:'Liberation Sans', sans-serif;left:455.00px;transform:scale(1.0,1.08);transform-origin:left 18.88px;">R</div>
<div class="t" style="top:818.32px;font-size:22.3px;line-height:22.3px;color:#111;font-weight:400;font-family:'Liberation Sans', sans-serif;left:588.00px;transform:scale(1.0,1.08);transform-origin:left 18.88px;">S</div>
<div class="t" style="top:818.32px;font-size:22.3px;line-height:22.3px;color:#111;font-weight:400;font-family:'Liberation Sans', sans-serif;right:1037.00px;transform:scale(1.0,1.08);transform-origin:right 18.88px;">1</div>
<div class="t" style="top:818.32px;font-size:22.3px;line-height:22.3px;color:#111;font-weight:400;font-family:'Liberation Sans', sans-serif;right:877.50px;transform:scale(1.0,1.08);transform-origin:right 18.88px;">5</div>
<div class="t" style="top:817.73px;font-size:23px;line-height:23px;color:#111;font-weight:400;font-family:'Liberation Sans', sans-serif;right:748.00px;transform:scale(1.0,1.05);transform-origin:right 19.47px;">False</div>
<div class="r" style="left:133px;top:308px;width:205px;height:75px;background:#ebf5f7;"></div>
<div class="t" style="top:319.53px;font-size:23px;line-height:23px;color:#111;font-weight:700;font-family:'Liberation Sans', sans-serif;left:137.30px;">nflverse_gam</div>
<div class="t" style="top:349.23px;font-size:23px;line-height:23px;color:#111;font-weight:700;font-family:'Liberation Sans', sans-serif;left:137.30px;">e_id</div>
<div class="r" style="left:308px;top:312px;width:28px;height:27.5px;background:#c6e2e7;border-radius:5px;"></div>
<svg class="r" style="left:311px;top:314px;" width="22" height="24" viewBox="0 0 22 24"><g fill="none" stroke="#2b8ca0" stroke-width="1.7" stroke-linejoin="round"><ellipse cx="11" cy="6" rx="7.8" ry="2.6"/>
<path d="M3.2 6 L9 14 V20.5 A2 2 0 0 0 13 20.5 V14 L18.8 6"/></g></svg>
<div class="t" style="top:334.23px;font-size:23px;line-height:23px;color:#111;font-weight:700;font-family:'Liberation Sans', sans-serif;left:347.60px;">week</div>
<div class="t" style="top:319.53px;font-size:23px;line-height:23px;color:#111;font-weight:700;font-family:'Liberation Sans', sans-serif;left:455.50px;">starting</div>
<div class="t" style="top:349.23px;font-size:23px;line-height:23px;color:#111;font-weight:700;font-family:'Liberation Sans', sans-serif;left:455.50px;">_hash</div>
<div class="t" style="top:319.53px;font-size:23px;line-height:23px;color:#111;font-weight:700;font-family:'Liberation Sans', sans-serif;left:588.00px;">qb_loc</div>
<div class="t" style="top:349.23px;font-size:23px;line-height:23px;color:#111;font-weight:700;font-family:'Liberation Sans', sans-serif;left:588.00px;">ation</div>
<div class="t" style="top:319.53px;font-size:23px;line-height:23px;color:#111;font-weight:700;font-family:'Liberation Sans', sans-serif;left:714.00px;">n_offense</div>
<div class="t" style="top:349.23px;font-size:23px;line-height:23px;color:#111;font-weight:700;font-family:'Liberation Sans', sans-serif;left:714.00px;">_backfield</div>
<div class="t" style="top:319.53px;font-size:23px;line-height:23px;color:#111;font-weight:700;font-family:'Liberation Sans', sans-serif;left:878.50px;">n_defense</div>
<div class="t" style="top:349.23px;font-size:23px;line-height:23px;color:#111;font-weight:700;font-family:'Liberation Sans', sans-serif;left:878.50px;">_box</div>
<div class="t" style="top:319.53px;font-size:23px;line-height:23px;color:#111;font-weight:700;font-family:'Liberation Sans', sans-serif;left:1039.50px;">is_no_</div>
<div class="t" style="top:349.23px;font-size:23px;line-height:23px;color:#111;font-weight:700;font-family:'Liberation Sans', sans-serif;left:1039.50px;">huddle</div>
<svg class="r" style="left:420.5px;top:319px;" width="20" height="13" viewBox="0 0 20 13"><path d="M2.4 2.7 L9.9 10.3 L17.3 2.7" fill="none" stroke="#111" stroke-width="1.9" stroke-linecap="round" stroke-linejoin="round"/></svg>
<svg class="r" style="left:553.5px;top:319px;" width="20" height="13" viewBox="0 0 20 13"><path d="M2.4 2.7 L9.9 10.3 L17.3 2.7" fill="none" stroke="#111" stroke-width="1.9" stroke-linecap="round" stroke-linejoin="round"/></svg>
<svg class="r" style="left:679.3px;top:319px;" width="20" height="13" viewBox="0 0 20 13"><path d="M2.4 2.7 L9.9 10.3 L17.3 2.7" fill="none" stroke="#111" stroke-width="1.9" stroke-linecap="round" stroke-linejoin="round"/></svg>
<svg class="r" style="left:844px;top:319px;" width="20" height="13" viewBox="0 0 20 13"><path d="M2.4 2.7 L9.9 10.3 L17.3 2.7" fill="none" stroke="#111" stroke-width="1.9" stroke-linecap="round" stroke-linejoin="round"/></svg>
<svg class="r" style="left:1005px;top:319px;" width="20" height="13" viewBox="0 0 20 13"><path d="M2.4 2.7 L9.9 10.3 L17.3 2.7" fill="none" stroke="#111" stroke-width="1.9" stroke-linecap="round" stroke-linejoin="round"/></svg>
<svg class="r" style="left:1134.5px;top:319px;" width="20" height="13" viewBox="0 0 20 13"><path d="M2.4 2.7 L9.9 10.3 L17.3 2.7" fill="none" stroke="#111" stroke-width="1.9" stroke-linecap="round" stroke-linejoin="round"/></svg>
<div class="r" style="left:129px;top:304.8px;width:1034px;height:3.1999999999999886px;background:#4a8f9f;"></div>
<div class="r" style="left:129px;top:382.6px;width:211.5px;height:3.1999999999999886px;background:#4a8f9f;"></div>
<div class="r" style="left:129px;top:304.8px;width:4px;height:540.7px;background:#4a8f9f;"></div>
<div class="r" style="left:337.6px;top:304.8px;width:3.0px;height:81.0px;background:#4a8f9f;"></div>
<div class="r" style="left:1163.5px;top:230px;width:23.5px;height:617px;background:#f5f5f5;"></div>
<div class="r" style="left:1163.5px;top:230px;width:1.5px;height:617px;background:#e4e4e4;"></div>
<div class="r" style="left:1165px;top:230px;width:22px;height:22.5px;background:#fafafa;"></div>
<div class="r" style="left:1165px;top:252.5px;width:22px;height:1.5px;background:#e6e6e6;"></div>
<svg class="r" style="left:1169px;top:234px;" width="16" height="12" viewBox="0 0 16 12"><path d="M1.5 11 L7.5 1 L13.5 11 Z" fill="#c4c4c4"/></svg>
<div class="r" style="left:1168.8px;top:257px;width:15.200000000000045px;height:69px;background:#c2c2c2;border-radius:8px;"></div>
<div class="r" style="left:1165px;top:821.5px;width:22px;height:1.5px;background:#e6e6e6;"></div>
<div class="r" style="left:1165px;top:823px;width:22px;height:23px;background:#fafafa;"></div>
<svg class="r" style="left:1169px;top:829px;" width="16" height="12" viewBox="0 0 16 12"><path d="M1 1 L7.5 11 L14 1 Z" fill="#c4c4c4"/></svg>
<div class="r" style="left:1187px;top:131px;width:3px;height:719px;background:#dadada;"></div>
<div class="r" style="left:1190px;top:131px;width:714px;height:600px;background:#ffffff;"></div>
<div class="r" style="left:1190px;top:131px;width:58px;height:576px;background:#fafafa;"></div>
<div class="r" style="left:1248px;top:131px;width:1.5px;height:576px;background:#e2e2e2;"></div>
<div class="r" style="left:1190px;top:510.0px;width:58px;height:31.850000000000023px;background:#e3f0fb;"></div>
<div class="r" style="left:1249.5px;top:510.0px;width:10.5px;height:31.850000000000023px;background:#eef6fd;"></div>
<div class="r" style="left:1260px;top:510.0px;width:629px;height:31.850000000000023px;background:#d5d8f2;"></div>
<div class="r" style="left:1260px;top:541.85px;width:629px;height:127.39999999999998px;background:#d7d4ef;"></div>
<div class="r" style="left:1260px;top:669.25px;width:177px;height:31.850000000000023px;background:#d7d4ef;"></div>
<div class="t" style="top:133.60px;font-size:22.7px;line-height:22.7px;color:#111;font-weight:400;font-family:'Liberation Mono', monospace;left:1201.80px;transform:scale(0.95,1.0);transform-origin:left 17.40px;">39</div>
<div class="t" style="top:133.60px;font-size:22.7px;line-height:22.7px;color:#111;font-weight:400;font-family:'Liberation Mono', monospace;left:1260.00px;">    year_list.append(int(year))</div>
<div class="t" style="top:165.45px;font-size:22.7px;line-height:22.7px;color:#111;font-weight:400;font-family:'Liberation Mono', monospace;left:1201.80px;transform:scale(0.95,1.0);transform-origin:left 17.40px;">40</div>
<div class="t" style="top:165.45px;font-size:22.7px;line-height:22.7px;color:#111;font-weight:400;font-family:'Liberation Mono', monospace;left:1260.00px;">    df = nfl.import_weekly_rosters(year_list)</div>
<div class="t" style="top:197.30px;font-size:22.7px;line-height:22.7px;color:#111;font-weight:400;font-family:'Liberation Mono', monospace;left:1201.80px;transform:scale(0.95,1.0);transform-origin:left 17.40px;">41</div>
<div class="t" style="top:229.15px;font-size:22.7px;line-height:22.7px;color:#111;font-weight:400;font-family:'Liberation Mono', monospace;left:1201.80px;transform:scale(0.95,1.0);transform-origin:left 17.40px;">42</div>
<div class="t" style="top:229.15px;font-size:22.7px;line-height:22.7px;color:#111;font-weight:400;font-family:'Liberation Mono', monospace;left:1260.00px;">    <span style='color:#770088'>return</span> df</div>
<div class="t" style="top:261.00px;font-size:22.7px;line-height:22.7px;color:#111;font-weight:400;font-family:'Liberation Mono', monospace;left:1201.80px;transform:scale(0.95,1.0);transform-origin:left 17.40px;">43</div>
<div class="t" style="top:292.85px;font-size:22.7px;line-height:22.7px;color:#111;font-weight:400;font-family:'Liberation Mono', monospace;left:1201.80px;transform:scale(0.95,1.0);transform-origin:left 17.40px;">44</div>
<div class="t" style="top:292.85px;font-size:22.7px;line-height:22.7px;color:#111;font-weight:400;font-family:'Liberation Mono', monospace;left:1260.00px;"><span style='color:#770088'>def</span> <span style='color:#0000ff'>get_ngs_data</span>(stat_type, year):</div>
<svg class="r" style="left:1235px;top:306.54999999999995px;" width="11" height="10" viewBox="0 0 11 10"><path d="M1.3 1.2 L5.2 8.2 L9.1 1.2" fill="none" stroke="#6f6f6f" stroke-width="1.7"/></svg>
<div class="t" style="top:324.70px;font-size:22.7px;line-height:22.7px;color:#111;font-weight:400;font-family:'Liberation Mono', monospace;left:1201.80px;transform:scale(0.95,1.0);transform-origin:left 17.40px;">45</div>
<div class="t" style="top:324.70px;font-size:22.7px;line-height:22.7px;color:#111;font-weight:400;font-family:'Liberation Mono', monospace;left:1260.00px;">    year_list = []</div>
<div class="t" style="top:356.55px;font-size:22.7px;line-height:22.7px;color:#111;font-weight:400;font-family:'Liberation Mono', monospace;left:1201.80px;transform:scale(0.95,1.0);transform-origin:left 17.40px;">46</div>
<div class="t" style="top:356.55px;font-size:22.7px;line-height:22.7px;color:#111;font-weight:400;font-family:'Liberation Mono', monospace;left:1260.00px;">    year_list.append(int(year))</div>
<div class="t" style="top:388.40px;font-size:22.7px;line-height:22.7px;color:#111;font-weight:400;font-family:'Liberation Mono', monospace;left:1201.80px;transform:scale(0.95,1.0);transform-origin:left 17.40px;">47</div>
<div class="t" style="top:388.40px;font-size:22.7px;line-height:22.7px;color:#111;font-weight:400;font-family:'Liberation Mono', monospace;left:1260.00px;">    df = nfl.import_ngs_data(stat_type, year_l</div>
<div class="t" style="top:420.25px;font-size:22.7px;line-height:22.7px;color:#111;font-weight:400;font-family:'Liberation Mono', monospace;left:1201.80px;transform:scale(0.95,1.0);transform-origin:left 17.40px;">48</div>
<div class="t" style="top:452.10px;font-size:22.7px;line-height:22.7px;color:#111;font-weight:400;font-family:'Liberation Mono', monospace;left:1201.80px;transform:scale(0.95,1.0);transform-origin:left 17.40px;">49</div>
<div class="t" style="top:452.10px;font-size:22.7px;line-height:22.7px;color:#111;font-weight:400;font-family:'Liberation Mono', monospace;left:1260.00px;">    <span style='color:#770088'>return</span> df</div>
<div class="t" style="top:483.95px;font-size:22.7px;line-height:22.7px;color:#111;font-weight:400;font-family:'Liberation Mono', monospace;left:1201.80px;transform:scale(0.95,1.0);transform-origin:left 17.40px;">50</div>
<div class="t" style="top:515.80px;font-size:22.7px;line-height:22.7px;color:#111;font-weight:400;font-family:'Liberation Mono', monospace;left:1201.80px;transform:scale(0.95,1.0);transform-origin:left 17.40px;">51</div>
<div class="t" style="top:515.80px;font-size:22.7px;line-height:22.7px;color:#111;font-weight:400;font-family:'Liberation Mono', monospace;left:1260.00px;"><span style='color:#770088'>def</span> <span style='color:#0000ff'>get_ftn_data</span>(year):</div>
<svg class="r" style="left:1235px;top:529.5px;" width="11" height="10" viewBox="0 0 11 10"><path d="M1.3 1.2 L5.2 8.2 L9.1 1.2" fill="none" stroke="#6f6f6f" stroke-width="1.7"/></svg>
<div class="t" style="top:547.65px;font-size:22.7px;line-height:22.7px;color:#111;font-weight:400;font-family:'Liberation Mono', monospace;left:1201.80px;transform:scale(0.95,1.0);transform-origin:left 17.40px;">52</div>
<div class="t" style="top:547.65px;font-size:22.7px;line-height:22.7px;color:#111;font-weight:400;font-family:'Liberation Mono', monospace;left:1260.00px;">    year_list = []</div>
<div class="t" style="top:579.50px;font-size:22.7px;line-height:22.7px;color:#111;font-weight:400;font-family:'Liberation Mono', monospace;left:1201.80px;transform:scale(0.95,1.0);transform-origin:left 17.40px;">53</div>
<div class="t" style="top:579.50px;font-size:22.7px;line-height:22.7px;color:#111;font-weight:400;font-family:'Liberation Mono', monospace;left:1260.00px;">    year_list.append(int(year))</div>
<div class="t" style="top:611.35px;font-size:22.7px;line-height:22.7px;color:#111;font-weight:400;font-family:'Liberation Mono', monospace;left:1201.80px;transform:scale(0.95,1.0);transform-origin:left 17.40px;">54</div>
<div class="t" style="top:611.35px;font-size:22.7px;line-height:22.7px;color:#111;font-weight:400;font-family:'Liberation Mono', monospace;left:1260.00px;">    df = nfl.import_ftn_data(year_list)</div>
<div class="t" style="top:643.20px;font-size:22.7px;line-height:22.7px;color:#111;font-weight:400;font-family:'Liberation Mono', monospace;left:1201.80px;transform:scale(0.95,1.0);transform-origin:left 17.40px;">55</div>
<div class="t" style="top:675.05px;font-size:22.7px;line-height:22.7px;color:#111;font-weight:400;font-family:'Liberation Mono', monospace;left:1201.80px;transform:scale(0.95,1.0);transform-origin:left 17.40px;">56</div>
<div class="t" style="top:675.05px;font-size:22.7px;line-height:22.7px;color:#111;font-weight:400;font-family:'Liberation Mono', monospace;left:1260.00px;">    <span style='color:#770088'>return</span> df</div>
<div class="r" style="left:1894px;top:528px;width:16px;height:174.5px;background:#c2c2c2;border-radius:8px;"></div>
<div class="r" style="left:1195.3px;top:713px;width:635.9000000000001px;height:11.700000000000045px;background:#c2c2c2;border-radius:6px;"></div>
<div class="r" style="left:1190px;top:730px;width:714px;height:2px;background:#dedede;"></div>
<div class="r" style="left:1190px;top:732px;width:714px;height:69px;background:#fafafa;"></div>
<div class="r" style="left:1190px;top:801px;width:714px;height:1px;background:#e0e0e0;"></div>
<div class="r" style="left:1190px;top:802px;width:714px;height:48px;background:#ffffff;"></div>
<div class="t" style="top:755.88px;font-size:22px;line-height:22px;color:#111;font-weight:400;font-family:'Liberation Sans', sans-serif;left:1203.50px;">Console</div>
<div class="r" style="left:1541px;top:751px;width:53px;height:31px;background:#2fad54;border-radius:16px;"></div>
<svg class="r" style="left:1565px;top:755px;" width="24" height="24" viewBox="0 0 24 24"><circle cx="12.5" cy="11.5" r="10.8" fill="#fff"/></svg>
<div class="t" style="top:755.71px;font-size:22.2px;line-height:22.2px;color:#111;font-weight:400;font-family:'Liberation Sans', sans-serif;left:1604.50px;">Execute on wake</div>
<div class="r" style="left:1795px;top:746px;width:88px;height:42px;background:#ebebeb;border-radius:7px;"></div>
<svg class="r" style="left:1811px;top:759px;" width="14" height="16" viewBox="0 0 14 16"><path d="M2 2 L12 8 L2 14 Z" fill="#111"/></svg>
<div class="t" style="top:755.88px;font-size:22px;line-height:22px;color:#111;font-weight:400;font-family:'Liberation Sans', sans-serif;left:1833.20px;">Run</div>
<div class="t" style="top:829.90px;font-size:22.7px;line-height:22.7px;color:#111;font-weight:400;font-family:'Liberation Mono', monospace;left:1210.50px;">Build completed</div>
</body></html>
